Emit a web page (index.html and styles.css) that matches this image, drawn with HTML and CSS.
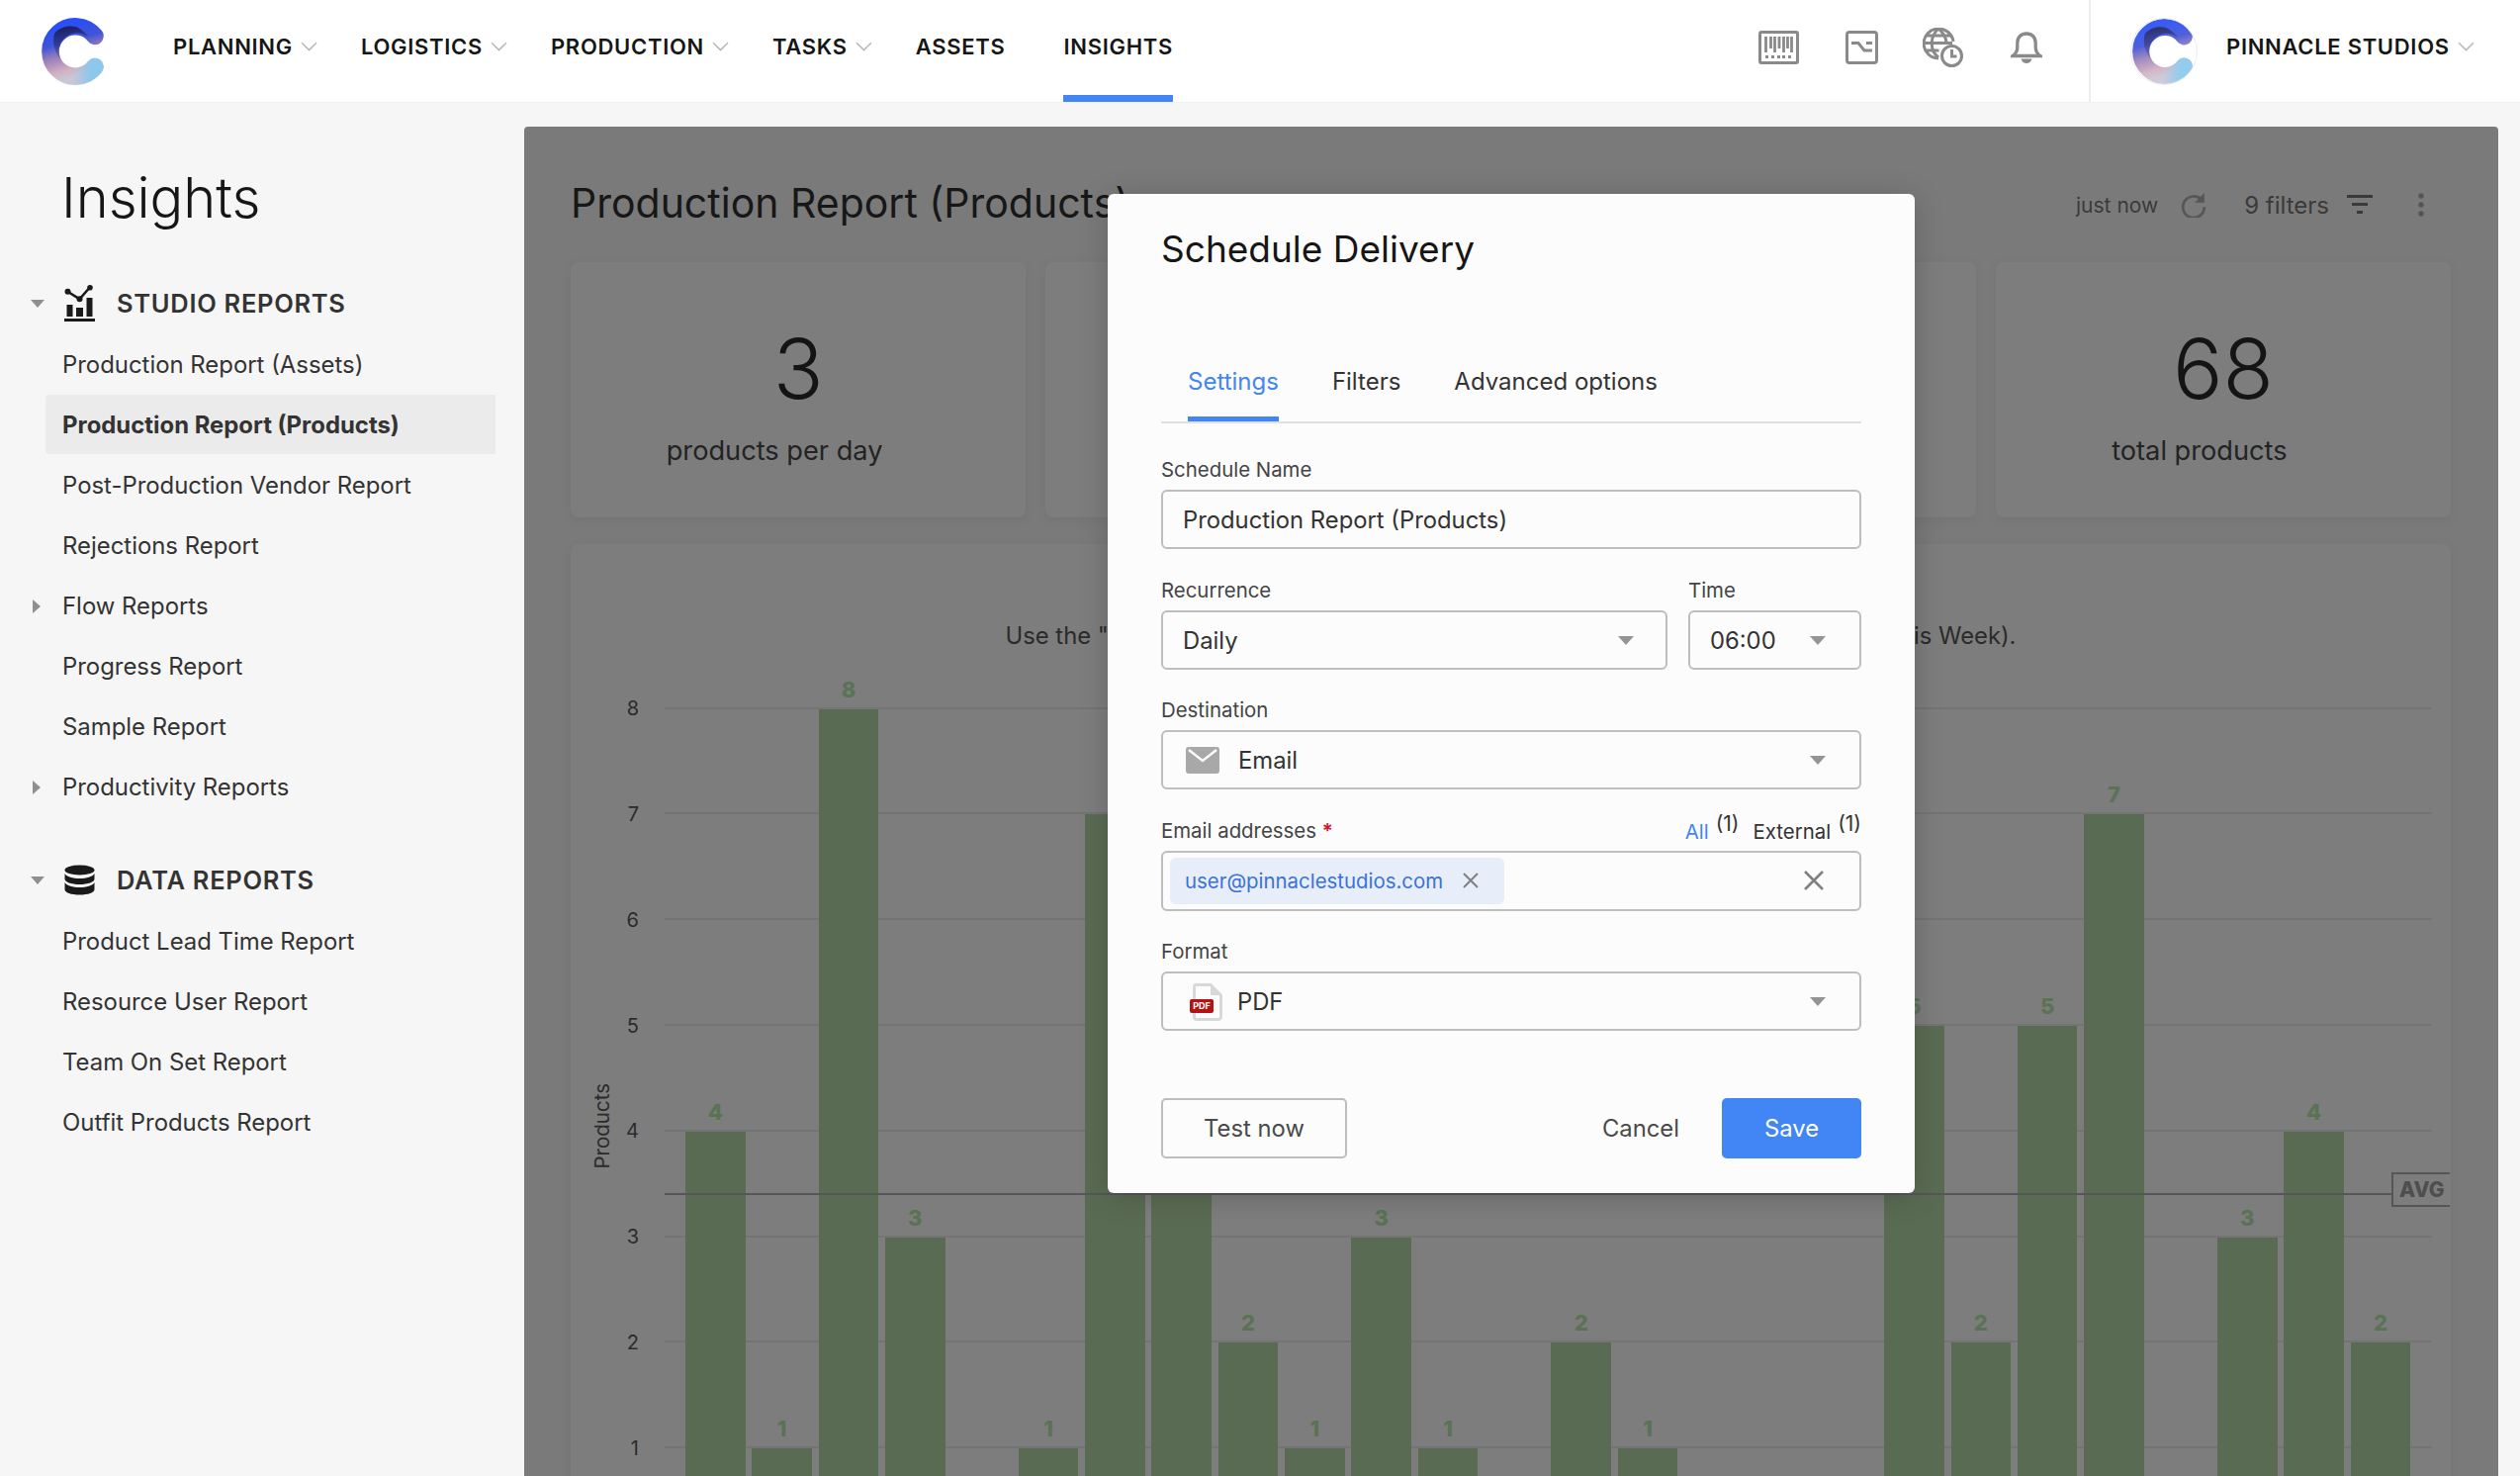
FILE: index.html
```html
<!DOCTYPE html>
<html lang="en">
<head>
<meta charset="utf-8">
<title>Insights</title>
<link rel="stylesheet" href="styles.css">
</head>
<body>
<svg class="defs" width="0" height="0" aria-hidden="true">
  <defs>
    <linearGradient id="cBase" x1="0.3" y1="0" x2="0.55" y2="1">
      <stop offset="0" stop-color="#2a4ff5"/>
      <stop offset="0.3" stop-color="#3f54d6"/>
      <stop offset="0.55" stop-color="#9a7fba"/>
      <stop offset="0.85" stop-color="#d3b2c2"/>
      <stop offset="1" stop-color="#c9c6d6"/>
    </linearGradient>
    <linearGradient id="cTail" x1="0" y1="0" x2="1" y2="0">
      <stop offset="0" stop-color="#8cc8ec" stop-opacity="0"/>
      <stop offset="0.8" stop-color="#8cc8ec"/>
    </linearGradient>
    <linearGradient id="cDark" x1="0.3" y1="0" x2="0.5" y2="1">
      <stop offset="0" stop-color="#1a1d55"/>
      <stop offset="1" stop-color="#3a3a96" stop-opacity="0"/>
    </linearGradient>
    <symbol id="logo" viewBox="0 0 68 68">
      <path d="M55 18.5A25.2 25.2 0 1 0 55 49.5" fill="none" stroke="url(#cBase)" stroke-width="17.5" stroke-linecap="round"/>
      <path d="M33 58.6A25.2 25.2 0 0 0 55 49.5" fill="none" stroke="url(#cTail)" stroke-width="17.5" stroke-linecap="round"/>
      <path d="M14 16C20 8 34 6 41 12C45 15 47 17 48 19A16.500 16.500 0 0 0 26 48C16 40 11 28 14 16Z" fill="url(#cDark)"/>
    </symbol>
  </defs>
</svg>

<header class="topbar">
  <svg class="logo"><use href="#logo"/></svg>
  <nav class="nav">
    <a class="nav-item">PLANNING<svg class="chev" viewBox="0 0 16 10"><path d="M1 1l7 7 7-7"/></svg></a>
    <a class="nav-item">LOGISTICS<svg class="chev" viewBox="0 0 16 10"><path d="M1 1l7 7 7-7"/></svg></a>
    <a class="nav-item">PRODUCTION<svg class="chev" viewBox="0 0 16 10"><path d="M1 1l7 7 7-7"/></svg></a>
    <a class="nav-item">TASKS<svg class="chev" viewBox="0 0 16 10"><path d="M1 1l7 7 7-7"/></svg></a>
    <a class="nav-item nav-plain">ASSETS</a>
    <a class="nav-item nav-active">INSIGHTS</a>
  </nav>
  <div class="tools">
    <svg class="tool tool-barcode" viewBox="0 0 41 34"><rect x="1.500" y="1.500" width="38" height="31" rx="1.500" class="tl"/><path class="tl-bar" d="M7.500 6v16M12.500 6v12M16.500 6v16M21 6v12M25.500 6v16M29.500 6v12M33.500 6v16M7 26.500h3M13 26.500h3M19 26.500h3M24 26.500h3M30 26.500h3"/></svg>
    <svg class="tool tool-switch" viewBox="0 0 33 34"><rect x="1.500" y="1.500" width="30" height="31" rx="2.500" class="tl"/><path class="tl" d="M6 12.500h7l6 7.500h8M21 12.500h6"/></svg>
    <svg class="tool tool-globe" viewBox="0 0 41 40"><path class="tl" d="M16 31A15 15 0 1 1 31 14M2 15.500h16M18 15.500h12M3.500 8h25M3.500 23h13M16 1c-9 8-9 22 0 29M16 1c5 4 7.500 8.500 8 14"/><circle cx="29.500" cy="28.500" r="10" class="tl tl-white"/><path class="tl" d="M29.500 22v7h5"/></svg>
    <svg class="tool tool-bell" viewBox="0 0 32 32"><path class="tl tl-heavy" d="M2 24.500h28c-3-2-4.800-5-4.800-9v-4C25.200 5.500 21.500 2 16 2S6.800 5.500 6.800 11.500v4c0 4-1.800 7-4.800 9Z"/><path class="tf" d="M10.500 27.500h11c-.5 2.500-3 4.500-5.500 4.500s-5-2-5.500-4.500Z"/></svg>
  </div>
  <div class="account">
    <svg class="logo logo-ring"><use href="#logo"/></svg>
    <span class="account-name">PINNACLE STUDIOS</span>
    <svg class="chev" viewBox="0 0 16 10"><path d="M1 1l7 7 7-7"/></svg>
  </div>
</header>

<div class="layout">
  <aside class="sidebar">
    <h1 class="side-title">Insights</h1>
    <section class="group">
      <div class="group-head">
        <span class="tri tri-down"></span>
        <svg class="group-icon" viewBox="0 0 31 37"><path d="M3.500 6.700l12 7.600L26 2.300" fill="none" stroke="#1a1a1a" stroke-width="2.500"/><circle cx="3.500" cy="6.700" r="3" fill="#1a1a1a"/><circle cx="15.500" cy="14.300" r="3" fill="#1a1a1a"/><circle cx="26" cy="2.800" r="2.800" fill="#1a1a1a"/><path d="M2.500 20h6v12h-6zM12 23h7v9h-7zM22.500 13h6v19h-6zM0 34h31v3H0z" fill="#1a1a1a"/></svg>
        <span class="group-name">STUDIO REPORTS</span>
      </div>
      <ul class="side-list">
        <li class="side-item">Production Report (Assets)</li>
        <li class="side-item side-active">Production Report (Products)</li>
        <li class="side-item">Post-Production Vendor Report</li>
        <li class="side-item">Rejections Report</li>
        <li class="side-item"><span class="tri tri-right"></span>Flow Reports</li>
        <li class="side-item">Progress Report</li>
        <li class="side-item">Sample Report</li>
        <li class="side-item"><span class="tri tri-right"></span>Productivity Reports</li>
      </ul>
    </section>
    <section class="group group-second">
      <div class="group-head">
        <span class="tri tri-down"></span>
        <svg class="group-icon" viewBox="0 0 31 31"><ellipse cx="15.500" cy="5.500" rx="15" ry="5" fill="#1a1a1a"/><path d="M.5 9c2 3.500 8 5 15 5s13-1.500 15-5v5.500c0 3-6.500 5.500-15 5.500S.5 17.500.5 14.500Z" fill="#1a1a1a"/><path d="M.5 18c2 3.500 8 5 15 5s13-1.500 15-5v7c0 3.300-6.500 5.500-15 5.500S.5 28.300.5 25Z" fill="#1a1a1a"/></svg>
        <span class="group-name">DATA REPORTS</span>
      </div>
      <ul class="side-list">
        <li class="side-item">Product Lead Time Report</li>
        <li class="side-item">Resource User Report</li>
        <li class="side-item">Team On Set Report</li>
        <li class="side-item">Outfit Products Report</li>
      </ul>
    </section>
  </aside>

  <main class="panel">
    <div class="panel-head">
      <h2 class="panel-title">Production Report (Products)</h2>
      <div class="panel-tools">
        <span class="stamp">just now</span>
        <svg class="refresh" viewBox="0 0 24 24"><path d="M19.500 7.500A10 10 0 1 0 22 14" fill="none" stroke="#565656" stroke-width="2.500"/><path d="M22 1v9h-9Z" fill="#565656"/></svg>
        <span class="filters">9 filters</span>
        <svg class="filter-icon" viewBox="0 0 26 20"><path d="M0 0h26v3H0zM5 8h16v3H5zM10 16h6v3h-6z" fill="#3a3a3a"/></svg>
        <svg class="more" viewBox="0 0 6 24"><circle cx="3" cy="3" r="2.700"/><circle cx="3" cy="12" r="2.700"/><circle cx="3" cy="21" r="2.700"/></svg>
      </div>
    </div>

    <div class="stats">
      <div class="stat"><div class="stat-num">3</div><div class="stat-label">products per day</div></div>
      <div class="stat"><div class="stat-num">12</div><div class="stat-label">products this week</div></div>
      <div class="stat"><div class="stat-num">26</div><div class="stat-label">working days</div></div>
      <div class="stat"><div class="stat-num">68</div><div class="stat-label">total products</div></div>
    </div>

    <section class="chart-card">
      <p class="note">Use the "Date" filter to zoom in on a specific period of time (e.g. Last Month or This Week).</p>
      <div class="chart">
        <div class="axis-title"><span>Products</span></div>
        <div class="y-axis">
          <span>8</span><span>7</span><span>6</span><span>5</span><span>4</span><span>3</span><span>2</span><span>1</span>
        </div>
        <div class="plot">
          <div class="col"><em>4</em><i style="height:427px"></i></div>
          <div class="col"><em>1</em><i style="height:107px"></i></div>
          <div class="col"><em>8</em><i style="height:854px"></i></div>
          <div class="col"><em>3</em><i style="height:320px"></i></div>
          <div class="col"></div>
          <div class="col"><em>1</em><i style="height:107px"></i></div>
          <div class="col"><em>7</em><i style="height:748px"></i></div>
          <div class="col"><em>6</em><i style="height:641px"></i></div>
          <div class="col"><em>2</em><i style="height:214px"></i></div>
          <div class="col"><em>1</em><i style="height:107px"></i></div>
          <div class="col"><em>3</em><i style="height:320px"></i></div>
          <div class="col"><em>1</em><i style="height:107px"></i></div>
          <div class="col"></div>
          <div class="col"><em>2</em><i style="height:214px"></i></div>
          <div class="col"><em>1</em><i style="height:107px"></i></div>
          <div class="col"></div>
          <div class="col"></div>
          <div class="col"></div>
          <div class="col"><em>5</em><i style="height:534px"></i></div>
          <div class="col"><em>2</em><i style="height:214px"></i></div>
          <div class="col"><em>5</em><i style="height:534px"></i></div>
          <div class="col"><em>7</em><i style="height:748px"></i></div>
          <div class="col"></div>
          <div class="col"><em>3</em><i style="height:320px"></i></div>
          <div class="col"><em>4</em><i style="height:427px"></i></div>
          <div class="col"><em>2</em><i style="height:214px"></i></div>
          <div class="avg"><span class="avg-tag">AVG</span></div>
        </div>
      </div>
    </section>

    <div class="backdrop">
      <div class="modal">
        <h3 class="modal-title">Schedule Delivery</h3>
        <div class="tabs">
          <span class="tab tab-active">Settings</span>
          <span class="tab">Filters</span>
          <span class="tab">Advanced options</span>
        </div>
        <div class="form">
          <div class="field">
            <label class="label">Schedule Name</label>
            <div class="control">Production Report (Products)</div>
          </div>
          <div class="row">
            <div class="field field-grow">
              <label class="label">Recurrence</label>
              <div class="control control-select control-daily">Daily<span class="caret"></span></div>
            </div>
            <div class="field field-time">
              <label class="label">Time</label>
              <div class="control control-select control-time">06:00<span class="caret"></span></div>
            </div>
          </div>
          <div class="field">
            <label class="label">Destination</label>
            <div class="control control-select">
              <svg class="ctl-icon" viewBox="0 0 34 27"><rect width="34" height="27" rx="3" fill="#a8a8a8"/><path d="M3 3l14 11L31 3" fill="none" stroke="#fcfcfc" stroke-width="2.500"/></svg>
              Email<span class="caret"></span>
            </div>
          </div>
          <div class="field">
            <div class="label-row">
              <label class="label">Email addresses <b class="req">*</b></label>
              <div class="counts">
                <span class="count count-on">All<sup>(1)</sup></span>
                <span class="count">External<sup>(1)</sup></span>
              </div>
            </div>
            <div class="control control-tags">
              <span class="tag">user@pinnaclestudios.com<svg class="x x-small" viewBox="0 0 16 16"><path d="M1 1l14 14M15 1L1 15"/></svg></span>
              <svg class="x x-clear" viewBox="0 0 20 20"><path d="M1 1l18 18M19 1L1 19"/></svg>
            </div>
          </div>
          <div class="field">
            <label class="label">Format</label>
            <div class="control control-select">
              <span class="pdf">
                <svg class="pdf-file" viewBox="0 0 30 38"><path d="M3 1.500h15L28.500 12v22a2.500 2.500 0 0 1-2.500 2.500H4A2.500 2.500 0 0 1 1.500 34V3A1.500 1.500 0 0 1 3 1.500Z" fill="none" stroke="#d8d8d8" stroke-width="3"/><path d="M18 1.500V12h10.500Z" fill="#d8d8d8"/></svg>
                <span class="pdf-badge">PDF</span>
              </span>
              PDF<span class="caret"></span>
            </div>
          </div>
        </div>
        <div class="modal-foot">
          <button class="btn btn-outline">Test now</button>
          <div class="foot-right">
            <button class="btn btn-text">Cancel</button>
            <button class="btn btn-primary">Save</button>
          </div>
        </div>
      </div>
    </div>
  </main>
</div>
</body>
</html>
```
FILE: styles.css
```css
* { box-sizing: border-box; }
html, body { margin: 0; height: 100%; }
body {
  width: 2548px;
  height: 1492px;
  overflow: hidden;
  background: #f6f6f6;
  color: #333;
  font-family: Inter, "Liberation Sans", sans-serif;
}
.defs { position: absolute; }
h1, h2, h3, p, ul { margin: 0; padding: 0; }
ul { list-style: none; }

/* top bar */
.topbar {
  height: 104px;
  background: #fff;
  display: flex;
  align-items: stretch;
  border-bottom: 1px solid #f1f1f1;
}
.logo { width: 68px; height: 68px; flex: none; align-self: center; margin-left: 41px; }
.nav { display: flex; align-items: stretch; margin-left: 66px; gap: 44px; }
.nav-item {
  display: flex;
  align-items: center;
  font-size: 22px;
  font-weight: 600;
  letter-spacing: 0.7px;
  color: #161616;
  padding-bottom: 2px;
  border-bottom: 7px solid transparent;
  height: 103px;
}
.nav-plain { margin-right: 15px; }
.nav-active { border-bottom-color: #4285f4; }
.chev { width: 17px; height: 11px; margin-left: 8px; fill: none; stroke: #b9b9b9; stroke-width: 1.500; flex: none; }
.tools { display: flex; align-items: center; margin-left: auto; height: 96px; align-self: flex-start; }
.tool { flex: none; }
.tl { fill: none; stroke: #8a8a8a; stroke-width: 3; }
.tl-bar { fill: none; stroke: #8a8a8a; stroke-width: 2.800; }
.tl-white { fill: #fff; }
.tl-heavy { stroke-width: 3.300; }
.tf { fill: #8a8a8a; }
.tool-barcode { width: 41px; height: 34px; }
.tool-switch { width: 33px; height: 34px; margin-left: 47px; }
.tool-globe { width: 41px; height: 40px; margin-left: 45px; }
.tool-bell { width: 32px; height: 32px; margin-left: 48px; }
.account {
  display: flex;
  align-items: center;
  margin-left: 47px;
  width: 436px;
  border-left: 2px solid #eee;
}
.logo-ring { margin-left: 40px; border: 1px solid #ececec; border-radius: 50%; opacity: .92; }
.account-name { margin-left: 29px; font-size: 22px; font-weight: 600; letter-spacing: 0.7px; color: #161616; padding-bottom: 9px; }
.account .chev { margin-bottom: 9px; }

/* layout */
.layout { display: flex; height: 1388px; }
.sidebar { width: 530px; flex: none; padding-top: 60px; }
.side-title { font-size: 56px; line-height: 72px; font-weight: 300; color: #161616; margin-left: 62px; }
.group { margin-top: 50px; }
.group-second { margin-top: 43px; }
.group-head { display: flex; align-items: center; height: 41px; position: relative; padding-left: 65px; }
.group-icon { width: 31px; height: 37px; flex: none; }
.group-second .group-icon { height: 31px; }
.group-name { margin-left: 22px; font-size: 25.500px; font-weight: 600; letter-spacing: 0.7px; color: #333; }
.tri { position: absolute; width: 0; height: 0; }
.tri-down { left: 31px; top: 17px; border-left: 7px solid transparent; border-right: 7px solid transparent; border-top: 8px solid #8f8f8f; }
.tri-right { left: -13px; top: 24px; border-top: 7px solid transparent; border-bottom: 7px solid transparent; border-left: 8px solid #8f8f8f; }
.side-list { margin-top: 11px; }
.side-item {
  position: relative;
  height: 61px;
  line-height: 62px;
  margin-left: 46px;
  width: 455px;
  padding-left: 17px;
  font-size: 23.900px;
  color: #333;
  border-radius: 4px 0 0 4px;
}
.side-active { background: #ebebeb; font-weight: 700; height: 60px; margin-bottom: 1px; }

/* dimmed report */
.panel {
  position: relative;
  flex: none;
  width: 1996px;
  height: 1364px;
  margin-top: 24px;
  padding: 48px 48px 0 47px;
  background: #7a7a7a;
  border-radius: 4px 4px 0 0;
  overflow: hidden;
}
.panel-head { display: flex; align-items: center; justify-content: space-between; height: 58px; }
.panel-title { font-size: 41px; line-height: 62px; font-weight: 400; color: #171717; }
.panel-tools { display: flex; align-items: center; padding: 4px 27px 0 0; color: #3a3a3a; }
.stamp { font-size: 21px; }
.refresh { width: 26px; height: 26px; margin-left: 23px; }
.filters { font-size: 24px; margin-left: 38px; }
.filter-icon { width: 26px; height: 20px; margin-left: 18px; }
.more { width: 6px; height: 24px; margin-left: 46px; fill: #555; }

.stats { display: grid; grid-template-columns: repeat(4, 1fr); gap: 20px; margin-top: 31px; }
.stat {
  height: 258px;
  background: #7d7d7d;
  border-radius: 8px;
  box-shadow: 0 3px 14px rgba(0,0,0,.05);
  padding-top: 60px;
  display: flex;
  flex-direction: column;
  align-items: center;
}
.stat-num { font-size: 84px; line-height: 96px; font-weight: 300; color: #141414; }
.stat-label { font-size: 27.200px; line-height: 36px; margin-top: 17px; padding-right: 48px; color: #232323; }

.chart-card {
  margin-top: 27px;
  height: 1100px;
  background: #7d7d7d;
  border-radius: 8px;
  box-shadow: 0 3px 14px rgba(0,0,0,.05);
  padding-top: 75px;
}
.note { font-size: 23.800px; line-height: 36px; text-align: center; color: #2b2b2b; }
.chart { display: flex; align-items: stretch; height: 895px; margin-top: 15px; }
.axis-title { width: 26px; margin-left: 19px; display: flex; align-items: center; padding-top: 30px; }
.axis-title span { writing-mode: vertical-rl; transform: rotate(180deg); font-size: 20.500px; color: #2b2b2b; }
.y-axis {
  width: 50px;
  display: flex;
  flex-direction: column;
  justify-content: flex-end;
  align-self: flex-end;
  margin-bottom: 53.400px;
  text-align: right;
  padding-right: 26px;
}
.y-axis span { height: 106.800px; line-height: 106px; font-size: 20px; color: #2b2b2b; flex: none; }
.plot {
  position: relative;
  width: 1787px;
  padding-left: 21px;
  display: flex;
  align-items: flex-end;
  gap: 6.760px;
  background: repeating-linear-gradient(to top, #747474 0, #747474 2px, transparent 2px, transparent 106.800px);
}
.col { width: 60.600px; flex: none; display: flex; flex-direction: column; align-items: center; }
.col em { font-style: normal; font-weight: 800; font-size: 22px; line-height: 26px; color: #5a7355; margin-bottom: 7px; }
.col i { display: block; width: 100%; background: #5a6b53; }
.avg { position: absolute; left: 0; right: -18px; top: 530px; height: 2px; background: #565656; }
.avg-tag {
  position: absolute;
  right: 0;
  top: -21px;
  width: 59px;
  height: 35px;
  border: 2px solid #565656;
  border-right: 0;
  background: #7d7d7d;
  font-size: 21px;
  line-height: 31px;
  font-weight: 800;
  color: #4e4e4e;
  padding-left: 6px;
  overflow: hidden;
  white-space: nowrap;
}

/* modal */
.backdrop { position: absolute; inset: 0; display: flex; justify-content: center; align-items: flex-start; padding-top: 68px; }
.modal {
  width: 816px;
  height: 1010px;
  background: #fcfcfc;
  border-radius: 6px;
  padding: 32px 54px 35px;
  box-shadow: 0 4px 30px rgba(0,0,0,.18);
  display: flex;
  flex-direction: column;
}
.modal-title { font-size: 37px; line-height: 48px; font-weight: 400; color: #161616; }
.tabs { display: flex; gap: 54px; margin-top: 64px; padding-left: 27px; border-bottom: 2px solid #e0e0e0; height: 88px; }
.tab { font-size: 24px; line-height: 34px; padding-top: 29px; color: #333; height: 86px; border-bottom: 5px solid transparent; }
.tab-active { color: #4285f4; border-bottom-color: #4285f4; border-radius: 3px 3px 0 0; }
.form { display: flex; flex-direction: column; gap: 27.500px; margin-top: 33px; }
.row { display: flex; gap: 21px; }
.field { display: flex; flex-direction: column; }
.field-grow { flex: 1; }
.field-time { width: 175px; flex: none; }
.label { font-size: 20.400px; line-height: 27px; height: 26px; color: #444; margin-bottom: 8px; display: block; }
.req { color: #d0132f; font-weight: 600; }
.label-row { display: flex; justify-content: space-between; }
.counts { display: flex; gap: 14px; line-height: 26px; }
.count { font-size: 20.400px; color: #333; padding-top: 2px; }
.count sup { font-size: 21px; margin-left: 7px; line-height: 0; }
.count-on { color: #4285f4; }
.count-on sup { color: #333; }
.control {
  position: relative;
  height: 60px;
  border: 2px solid #bdbdbd;
  border-radius: 6px;
  padding-left: 20px;
  padding-top: 1px;
  font-size: 23.800px;
  color: #333;
  display: flex;
  align-items: center;
  background: #fcfcfc;
}
.caret {
  margin-left: auto;
  margin-right: 34px;
  width: 0;
  height: 0;
  border-left: 8px solid transparent;
  border-right: 8px solid transparent;
  border-top: 9px solid #949494;
}
.control-daily .caret { margin-right: 32px; }
.ctl-icon { width: 34px; height: 27px; margin-left: 3px; margin-right: 19px; flex: none; }
.control-tags { height: 61px; padding-left: 7px; padding-top: 0; }
.tag {
  display: flex;
  align-items: center;
  height: 47px;
  width: 338px;
  padding-left: 15px;
  background: #e7eefa;
  border-radius: 6px;
  font-size: 20.400px;
  color: #3a72d8;
}
.x { fill: none; stroke: #808080; }
.x-small { width: 16px; height: 16px; stroke-width: 2; margin-left: auto; margin-right: 26px; }
.x-clear { width: 20px; height: 20px; stroke-width: 2.500; margin-left: auto; margin-right: 36px; }
.pdf { position: relative; width: 32px; height: 38px; margin-left: 8px; margin-right: 15px; flex: none; }
.pdf-file { position: absolute; left: 2px; top: 0; width: 30px; height: 38px; }
.pdf-badge {
  position: absolute;
  left: -1px;
  top: 16px;
  width: 24px;
  height: 14px;
  background: #b01515;
  border-radius: 2px;
  color: #fff;
  font-size: 9px;
  line-height: 14px;
  font-weight: 700;
  text-align: center;
}
.modal-foot { display: flex; justify-content: space-between; margin-top: 68px; }
.foot-right { display: flex; gap: 0; }
.btn { height: 61px; font: 400 23.800px Inter, "Liberation Sans", sans-serif; border-radius: 5px; cursor: pointer; }
.btn-outline { width: 188px; background: #fcfcfc; border: 2px solid #bdbdbd; color: #4a4a4a; }
.btn-text { width: 120px; margin-right: 22px; border: 0; background: transparent; color: #4a4a4a; }
.btn-primary { width: 141px; border: 0; background: #4285f4; color: #fff; }
```
